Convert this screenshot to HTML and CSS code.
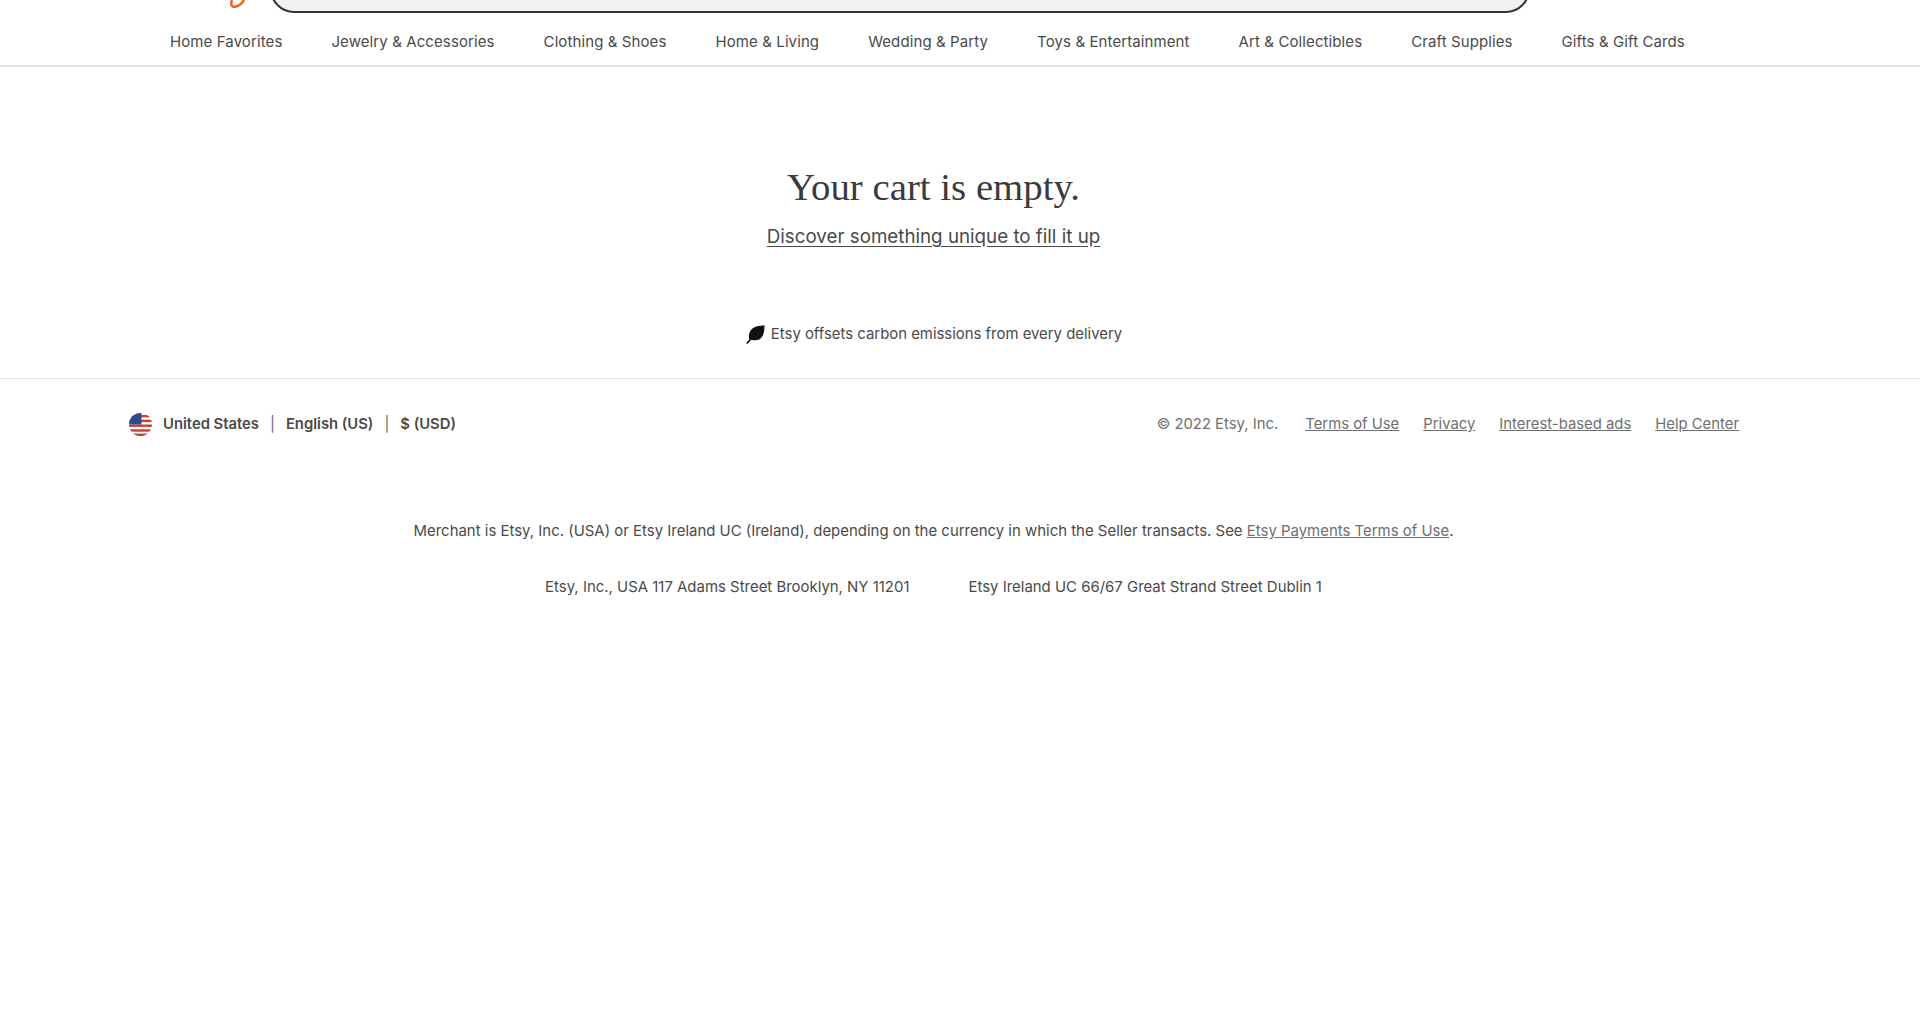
FILE: index.html
```html
<!DOCTYPE html>
<html lang="en">
<head>
<meta charset="utf-8">
<title>Etsy - Your cart</title>
<link rel="stylesheet" href="styles.css">
</head>
<body>
<header class="header">
  <div class="top">
    <svg class="logo-tail" width="24" height="8" viewBox="0 0 24 8" aria-hidden="true"><path d="M4 0C2.500 4 3 7 6.500 6.800C10.500 6.500 14.500 3 16 0" fill="none" stroke="#f1641e" stroke-width="2.600"/></svg>
    <div class="search"></div>
  </div>
  <nav class="nav">
    <a>Home Favorites</a>
    <a>Jewelry &amp; Accessories</a>
    <a>Clothing &amp; Shoes</a>
    <a>Home &amp; Living</a>
    <a>Wedding &amp; Party</a>
    <a>Toys &amp; Entertainment</a>
    <a>Art &amp; Collectibles</a>
    <a>Craft Supplies</a>
    <a>Gifts &amp; Gift Cards</a>
  </nav>
</header>
<main class="cart">
  <h1 class="title">Your cart is empty.</h1>
  <a class="discover">Discover something unique to fill it up</a>
  <p class="carbon">
    <svg class="leaf" width="20" height="20" viewBox="0 0 20 20" aria-hidden="true"><path d="M1 19.300L4.300 15.500C3.200 11.500 4.200 6.500 8 4C11.500 1.800 15.500 2 19.500 1.200C19.500 5 19.300 9 17.300 12.500C15 16.300 10.500 17 6.200 15.800L2.800 19.800Z" fill="#111"/></svg>
    <span>Etsy offsets carbon emissions from every delivery</span>
  </p>
</main>
<footer class="footer">
  <div class="footer-bar">
    <div class="locale">
      <svg class="flag" width="23" height="23" viewBox="0 0 24 24" aria-hidden="true">
        <defs><clipPath id="round"><circle cx="12" cy="12" r="12"/></clipPath></defs>
        <g clip-path="url(#round)">
          <rect width="24" height="24" fill="#fff"/>
          <rect y="2" width="24" height="2.500" fill="#c8402e"/>
          <rect y="7" width="24" height="2.500" fill="#c8402e"/>
          <rect y="12" width="24" height="2.500" fill="#c8402e"/>
          <rect y="17" width="24" height="2.500" fill="#c8402e"/>
          <rect y="21.500" width="24" height="2.500" fill="#c8402e"/>
          <rect width="13" height="12" fill="#2f4a8f"/>
        </g>
      </svg>
      <span>United States</span><i>|</i><span>English (US)</span><i>|</i><span>$ (USD)</span>
    </div>
    <div class="legal">
      <span class="copy">© 2022 Etsy, Inc.</span>
      <a>Terms of Use</a>
      <a>Privacy</a>
      <a>Interest-based ads</a>
      <a>Help Center</a>
    </div>
  </div>
  <p class="merchant">Merchant is Etsy, Inc. (USA) or Etsy Ireland UC (Ireland), depending on the currency in which the Seller transacts. See <a>Etsy Payments Terms of Use</a>.</p>
  <div class="addresses">
    <span>Etsy, Inc., USA 117 Adams Street Brooklyn, NY 11201</span>
    <span>Etsy Ireland UC 66/67 Great Strand Street Dublin 1</span>
  </div>
</footer>
</body>
</html>
```

FILE: styles.css
```css
* { box-sizing: border-box; }
html, body { margin: 0; padding: 0; background: #fff; }
body { font-family: Inter, "Liberation Sans", sans-serif; color: #4a4a4a; font-size: 14.950px; height: 1032px; overflow: hidden; }
a { color: inherit; }

.header { border-bottom: 2px solid #e1e3df; height: 67px; }
.top { height: 13px; overflow: hidden; display: flex; align-items: flex-end; padding-left: 228px; }
.logo-tail { align-self: flex-start; flex: none; }
.search { width: 1260px; height: 60px; margin-left: 18px; background: #f1f1f1; border: 2px solid #333; border-radius: 24px; flex: none; }
.nav { display: flex; gap: 49px; padding: 19px 0 0 170px; line-height: 20px; font-size: 15px; letter-spacing: .1px; }

.cart { display: flex; flex-direction: column; align-items: center; padding-top: 97px; height: 311px; width: 1867px; }
.title { margin: 0; font-family: "Liberation Serif", serif; font-weight: 400; font-size: 38.800px; line-height: 46px; color: #3a3a3a; }
.discover { margin-top: 15px; font-size: 18.750px; line-height: 24px; text-decoration: underline; text-underline-offset: 3px; }
.carbon { margin: 75px 0 0; display: flex; align-items: center; gap: 6px; line-height: 20px; font-size: 14.900px; }
.leaf { flex: none; }

.footer-bar { border-top: 1px solid #e1e3df; display: flex; justify-content: space-between; align-items: center; padding: 33px 181px 0 129px; line-height: 24px; }
.locale { display: flex; align-items: center; font-weight: 600; font-size: 14.800px; }
.flag { margin-right: 11px; }
.locale i { font-style: normal; font-weight: 400; margin: 0 11px; color: #666; }
.legal { display: flex; gap: 24px; color: #6f6f6f; font-size: 14.850px; }
.legal a { text-decoration: underline; }
.copy { margin-right: 3px; }

.merchant { margin: 85px 0 0; width: 1867px; text-align: center; line-height: 20px; }
.merchant a { color: #6f6f6f; text-decoration: underline; }
.addresses { margin-top: 36px; width: 1867px; display: flex; justify-content: center; gap: 59px; line-height: 20px; font-size: 14.950px; }
```
